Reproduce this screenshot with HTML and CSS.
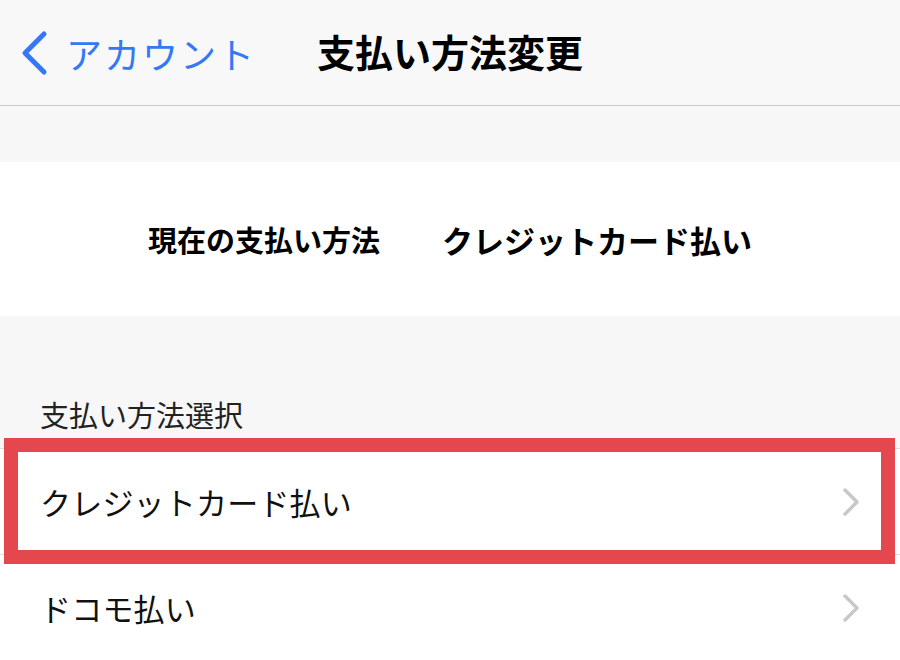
FILE: index.html
```html
<!DOCTYPE html>
<html lang="ja">
<head>
    <meta charset="UTF-8">
    <meta name="viewport" content="width=device-width, initial-scale=1.0">
    <title>支払い方法変更</title>
    <link rel="stylesheet" href="styles.css">
</head>
<body>

    <!-- Navigation bar -->
    <header class="navbar">
        <a class="back" href="#">
            <svg class="back-icon" width="30" height="48" viewBox="0 0 30 48">
                <polyline points="24,5 5,24 24,43" fill="none" stroke="#3478f6" stroke-width="5" stroke-linecap="round" stroke-linejoin="round"/>
            </svg>
            <span>アカウント</span>
        </a>
        <h1 class="title">支払い方法変更</h1>
        <div></div>
    </header>

    <div class="spacer"></div>

    <!-- Current method -->
    <section class="current">
        <span>現在の支払い方法</span>
        <span>クレジットカード払い</span>
    </section>

    <!-- Method selection -->
    <div class="section-label">支払い方法選択</div>
    <ul class="list">
        <li class="row selected">
            <span>クレジットカード払い</span>
            <svg class="chevron" width="18" height="30" viewBox="0 0 18 30">
                <polyline points="3,3 15,15 3,27" fill="none" stroke="#c7c7cc" stroke-width="3.5" stroke-linecap="round" stroke-linejoin="round"/>
            </svg>
        </li>
        <li class="row">
            <span>ドコモ払い</span>
            <svg class="chevron" width="18" height="30" viewBox="0 0 18 30">
                <polyline points="3,3 15,15 3,27" fill="none" stroke="#c7c7cc" stroke-width="3.5" stroke-linecap="round" stroke-linejoin="round"/>
            </svg>
        </li>
    </ul>

</body>
</html>
```

FILE: styles.css
```css
/* General page styling */
body {
    margin: 0;
    padding: 0;
    width: 900px;
    height: 660px;
    overflow: hidden;
    background-color: #f7f7f7;
    font-family: "Noto Sans CJK JP", "Noto Sans", sans-serif;
    color: #111;
}

/* Navigation bar */
.navbar {
    height: 105px;
    background-color: #f8f8f8;
    border-bottom: 1px solid #c8c8c8;
    display: grid;
    grid-template-columns: 1fr auto 1fr;
    align-items: center;
}

.back {
    display: flex;
    align-items: center;
    gap: 16px;
    padding-left: 20px;
    color: #3478f6;
    text-decoration: none;
    font-size: 36px;
    letter-spacing: 2px;
}

.back-icon {
    display: block;
}

.title {
    margin: 0 0 4px 0;
    font-size: 38px;
    font-weight: bold;
    color: #000;
}

.spacer {
    height: 56px;
}

/* Current payment method */
.current {
    height: 154px;
    background-color: #fff;
    display: flex;
    justify-content: center;
    align-items: center;
    gap: 62px;
    font-size: 29px;
    font-weight: bold;
    color: #000;
}

.current span:last-child {
    font-size: 31px;
}

/* Section label */
.section-label {
    height: 132px;
    box-sizing: border-box;
    padding: 76px 0 0 40px;
    font-size: 29px;
    line-height: 44px;
    color: #222;
}

/* List rows */
.list {
    list-style: none;
    margin: 0;
    padding: 0;
    background-color: #fff;
    border-top: 1px solid #dcdcdc;
}

.row {
    position: relative;
    height: 105px;
    display: flex;
    align-items: center;
    justify-content: space-between;
    padding: 0 40px 0 40px;
    border-bottom: 1px solid #dcdcdc;
    font-size: 31px;
    letter-spacing: 0.2px;
}

.chevron {
    display: block;
}

/* Red highlight around selected row */
.selected::after {
    content: "";
    position: absolute;
    left: 4px;
    right: 5px;
    top: -11px;
    bottom: -10px;
    border: 14px solid #e5474e;
}
```
